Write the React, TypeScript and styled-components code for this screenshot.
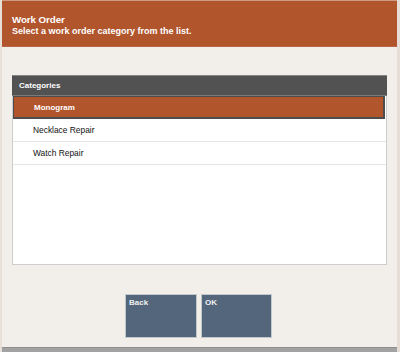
import React from "react";
import styled, { createGlobalStyle } from "styled-components";

const Global = createGlobalStyle`
  html, body { margin: 0; padding: 0; background: #f2efea; }
  body { font-family: "Liberation Sans", Arial, sans-serif; }
`;

const Screen = styled.div`
  width: 400px;
  height: 352px;
  box-sizing: border-box;
  display: flex;
  flex-direction: column;
  background: #f2efea;
  border-left: 2px solid #e7e0d8;
  border-right: 3px solid #e6ded6;
  overflow: hidden;
`;

const Header = styled.header`
  height: 47px;
  box-sizing: border-box;
  margin-left: -2px;
  background: #b1552d;
  border-top: 1px solid #cf9a82;
  border-bottom: 1px solid #b86646;
  padding: 13px 12px 0 12px;
  color: #ffffff;
`;

const Title = styled.div`
  font-size: 9.8px;
  line-height: 12px;
  font-weight: 700;
  letter-spacing: -0.1px;
`;

const Subtitle = styled.div`
  font-size: 9px;
  line-height: 11px;
  font-weight: 700;
`;

const Body = styled.main`
  flex: 1;
  display: flex;
  flex-direction: column;
  padding: 28px 10px 0 10px;
`;

const Panel = styled.section`
  height: 190px;
  box-sizing: border-box;
  background: #ffffff;
  border: 1px solid #cdcdcd;
  border-top: none;
  display: flex;
  flex-direction: column;
`;

const PanelHeader = styled.div`
  height: 21px;
  box-sizing: border-box;
  margin: 0 -1px;
  background: #525252;
  border-top: 1px solid #858585;
  border-bottom: 1px solid #7a7a7a;
  color: #ffffff;
  font-size: 8px;
  font-weight: 700;
  display: flex;
  align-items: center;
  padding-left: 7px;
`;

const Row = styled.div<{ $selected?: boolean }>`
  height: 23px;
  box-sizing: border-box;
  display: flex;
  align-items: center;
  padding-left: 20px;
  font-size: ${(p) => (p.$selected ? "8px" : "8.4px")};
  font-weight: ${(p) => (p.$selected ? 700 : 400)};
  color: ${(p) => (p.$selected ? "#ffffff" : "#111111")};
  background: ${(p) => (p.$selected ? "#b1552d" : "#ffffff")};
  border: ${(p) => (p.$selected ? "1px solid #4d4d4d" : "none")};
  border-right-width: ${(p) => (p.$selected ? "2px" : "0")};
  border-bottom: ${(p) => (p.$selected ? "2px solid #4d4d4d" : "1px solid #e4e4e4")};
  margin-right: ${(p) => (p.$selected ? "1px" : "0")};
`;

const ButtonBar = styled.div`
  display: flex;
  justify-content: center;
  gap: 4px;
  margin-top: 29px;
  padding-right: 2px;
`;

const ActionButton = styled.button<{ $w: number }>`
  width: ${(p) => p.$w}px;
  height: 44px;
  box-sizing: border-box;
  background: #53667b;
  border: 1px solid #c3c8cd;
  color: #f0f0f0;
  font-family: "Liberation Sans", Arial, sans-serif;
  font-size: 8px;
  font-weight: 700;
  text-align: left;
  padding: 3px 3px;
  display: flex;
  align-items: flex-start;
  cursor: pointer;
`;

const Spacer = styled.div`
  flex: 1;
`;

const BottomBar = styled.footer`
  height: 4px;
  margin: 0 -3px 0 -2px;
  background: #a2a2a2;
  border-top: 1px solid #8f8f8f;
`;

const categories = ["Monogram", "Necklace Repair", "Watch Repair"];

export default function App() {
  return (
    <>
      <Global />
      <Screen>
        <Header>
          <Title>Work Order</Title>
          <Subtitle>Select a work order category from the list.</Subtitle>
        </Header>
        <Body>
          <Panel>
            <PanelHeader>Categories</PanelHeader>
            {categories.map((c, i) => (
              <Row key={c} $selected={i === 0}>
                {c}
              </Row>
            ))}
          </Panel>
          <ButtonBar>
            <ActionButton $w={72}>Back</ActionButton>
            <ActionButton $w={71}>OK</ActionButton>
          </ButtonBar>
          <Spacer />
        </Body>
        <BottomBar />
      </Screen>
    </>
  );
}
